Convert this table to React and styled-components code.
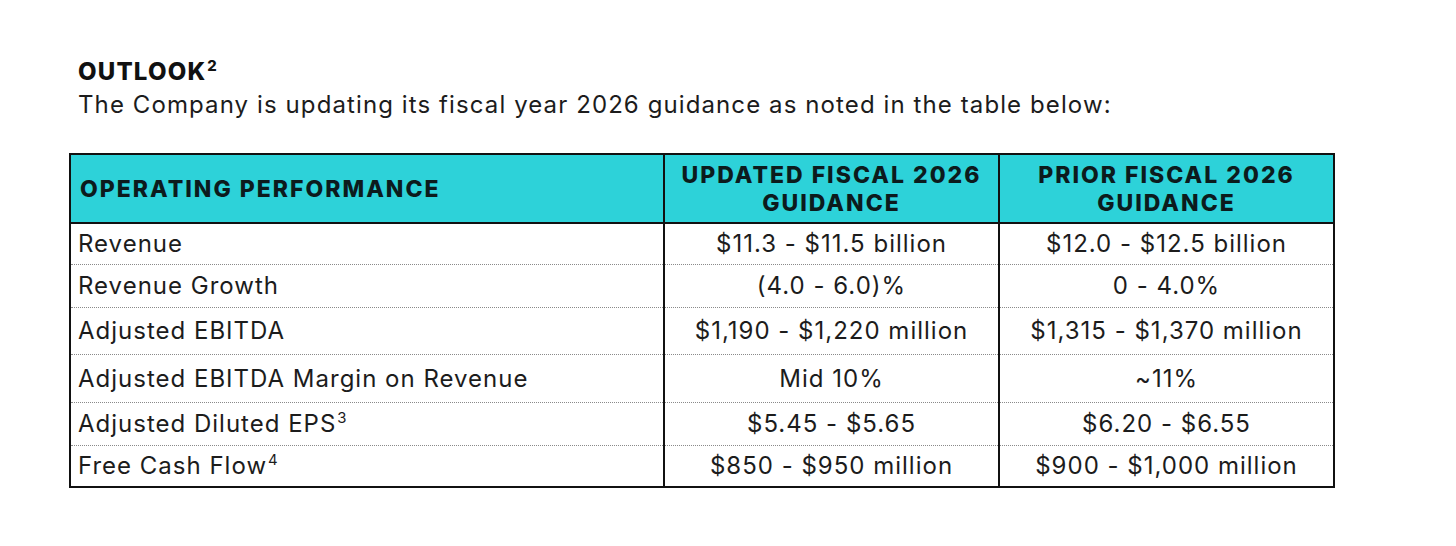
import styled, { createGlobalStyle } from "styled-components";

const GlobalStyle = createGlobalStyle`
  html, body {
    margin: 0;
    padding: 0;
    background: #ffffff;
  }
  body {
    font-family: Inter, "Noto Sans", "Liberation Sans", sans-serif;
    color: #1c1c1c;
  }
`;

const rows = [
  { label: "Revenue", updated: "$11.3 - $11.5 billion", prior: "$12.0 - $12.5 billion", h: 41 },
  { label: "Revenue Growth", updated: "(4.0 - 6.0)%", prior: "0 - 4.0%", h: 43 },
  { label: "Adjusted EBITDA", updated: "$1,190 - $1,220 million", prior: "$1,315 - $1,370 million", h: 47 },
  { label: "Adjusted EBITDA Margin on Revenue", updated: "Mid 10%", prior: "~11%", h: 48 },
  { label: "Adjusted Diluted EPS", note: "3", updated: "$5.45 - $5.65", prior: "$6.20 - $6.55", h: 43 },
  { label: "Free Cash Flow", note: "4", updated: "$850 - $950 million", prior: "$900 - $1,000 million", h: 42 },
];

function App() {
  return (
    <Page>
      <GlobalStyle />
      <Intro>
        <Title>
          OUTLOOK<Sup>2</Sup>
        </Title>
        <Lead>
          The Company is updating its fiscal year 2026 guidance as noted in the table below:
        </Lead>
      </Intro>

      <Table>
        <colgroup>
          <col style={{ width: 594 }} />
          <col style={{ width: 335 }} />
          <col style={{ width: 335 }} />
        </colgroup>
        <thead>
          <tr>
            <HeadCell align="left">OPERATING PERFORMANCE</HeadCell>
            <HeadCell>
              UPDATED FISCAL 2026
              <br />
              GUIDANCE
            </HeadCell>
            <HeadCell>
              PRIOR FISCAL 2026
              <br />
              GUIDANCE
            </HeadCell>
          </tr>
        </thead>
        <tbody>
          {rows.map((r, i) => (
            <Row key={r.label} $h={r.h} $last={i === rows.length - 1}>
              <Cell align="left">
                {r.label}
                {r.note && <Sup>{r.note}</Sup>}
              </Cell>
              <Cell>{r.updated}</Cell>
              <Cell>{r.prior}</Cell>
            </Row>
          ))}
        </tbody>
      </Table>
    </Page>
  );
}

export default App;

const Page = styled.div`
  width: 1456px;
  height: 546px;
  box-sizing: border-box;
  padding: 58px 0 0 69px;
  background: #ffffff;
`;

const Intro = styled.div`
  padding-left: 9px;
  margin-bottom: 33px;
`;

const Title = styled.div`
  font-size: 24px;
  font-weight: 800;
  line-height: 28px;
  letter-spacing: 1.2px;
  color: #111;
`;

const Sup = styled.sup`
  font-size: 0.62em;
  line-height: 0;
  vertical-align: 0.6em;
  margin-left: 1px;
  letter-spacing: 0;
`;

const Lead = styled.div`
  margin-top: 4px;
  font-size: 24px;
  font-weight: 400;
  line-height: 30px;
  letter-spacing: 1.1px;
  color: #1c1c1c;
`;

const Table = styled.table`
  border-collapse: collapse;
  table-layout: fixed;
  width: 1264px;
  border: 2px solid #111;
`;

const HeadCell = styled.th`
  height: 69px;
  box-sizing: border-box;
  padding: 0 9px;
  background: #2dd2d9;
  border: 2px solid #111;
  text-align: ${(p) => p.align || "center"};
  font-size: 23px;
  font-weight: 800;
  line-height: 28px;
  letter-spacing: 2px;
  color: #0c1b1d;
  vertical-align: middle;
`;

const Row = styled.tr`
  td {
    height: ${(p) => p.$h}px;
    border-bottom: ${(p) => (p.$last ? "2px solid #111" : "1.5px dotted #8a8a8a")};
  }
`;

const Cell = styled.td`
  box-sizing: border-box;
  padding: 0 7px;
  border-left: 2px solid #111;
  border-right: 2px solid #111;
  text-align: ${(p) => p.align || "center"};
  font-size: 24px;
  font-weight: 400;
  letter-spacing: 1px;
  color: #1c1c1c;
  vertical-align: middle;
  white-space: nowrap;
`;
